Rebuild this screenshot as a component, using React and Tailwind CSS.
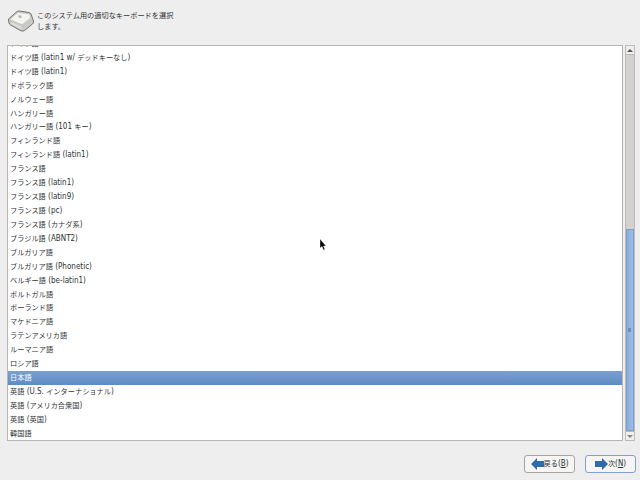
import React from 'react';

const languages = [
  'ドイツ語',
  'ドイツ語 (latin1 w/ デッドキーなし)',
  'ドイツ語 (latin1)',
  'ドボラック語',
  'ノルウェー語',
  'ハンガリー語',
  'ハンガリー語 (101 キー)',
  'フィンランド語',
  'フィンランド語 (latin1)',
  'フランス語',
  'フランス語 (latin1)',
  'フランス語 (latin9)',
  'フランス語 (pc)',
  'フランス語 (カナダ系)',
  'ブラジル語 (ABNT2)',
  'ブルガリア語',
  'ブルガリア語 (Phonetic)',
  'ベルギー語 (be-latin1)',
  'ポルトガル語',
  'ポーランド語',
  'マケドニア語',
  'ラテンアメリカ語',
  'ルーマニア語',
  'ロシア語',
  '日本語',
  '英語 (U.S. インターナショナル)',
  '英語 (アメリカ合衆国)',
  '英語 (英国)',
  '韓国語',
];

const Label = ({ text }) => (
  <>
    {text.split(/([\u3000-\u9fff]+)/).map((part, i) =>
      i % 2 === 1 ? <span key={i} className="text-[7.2px]">{part}</span> : <span key={i}>{part}</span>
    )}
  </>
);

const KeyIcon = () => (
  <svg width="26" height="22" viewBox="0 0 26 22" className="shrink-0">
    <path d="M0.5 9 L9 1.5 Q10 0.8 11.500 1 L21 2.500 Q22.500 2.800 23 4 L25.500 11 Q25.800 13 24.500 14 L16.500 20.500 Q15 21.500 13 20.800 L2.500 15 Q1 14 0.800 12.500 Z" fill="#c9c9c6" stroke="#5c5c5a" strokeWidth="0.8" />
    <path d="M2.500 9 L10 2.500 L20.500 4 Q22 4.500 22.500 7 L22.500 8 L15 14 Q14 14.500 12.500 14 L3 10 Z" fill="#f4f4f2" stroke="#bdbdba" strokeWidth="0.5" />
    <path d="M10 5.500 L13 5.500 L14 7.500 L11 8 Z" fill="#b5b5b2" />
    <path d="M3 12 L13 16.500 L14 19.500 L3.500 14 Z" fill="#e2e2df" />
  </svg>
);

const Arrow = ({ left }) => (
  <svg width="13" height="12" viewBox="0 0 13 12" className="shrink-0">
    <path
      d={left ? 'M0 6 L6 0 L6 3 L13 3 L13 9 L6 9 L6 12 Z' : 'M13 6 L7 0 L7 3 L0 3 L0 9 L7 9 L7 12 Z'}
      fill="#2f6ba8"
    />
  </svg>
);

const App = () => {
  return (
    <div className="relative w-[640px] h-[480px] overflow-hidden bg-[#eeeeee] text-[#2e3436] font-['DejaVu_Sans_Condensed','DejaVu_Sans','Noto_Sans_CJK_JP',sans-serif] text-[8px]">
      {/* Header */}
      <div className="h-[45px] flex items-start pl-[8px] pt-[10px] gap-[3px]">
        <KeyIcon />
        <p className="w-[140px] text-[7.2px] leading-[11px]">このシステム用の適切なキーボードを選択します。</p>
      </div>

      {/* List + scrollbar */}
      <div className="h-[396px] flex pl-[7px] pr-[4px]">
        <div className="w-[616px] border border-[#b8b6b2] bg-white overflow-hidden">
          <ul className="-mt-[9px]">
            {languages.map((name) => (
              <li
                key={name}
                className={
                  'h-[13.926px] pl-[2px] flex items-center whitespace-pre ' +
                  (name === '日本語' ? 'bg-gradient-to-b from-[#7ba0d2] to-[#5f8ac4] text-white' : '')
                }
              >
                <span><Label text={name} /></span>
              </li>
            ))}
          </ul>
        </div>

        <div className="w-[10px] ml-[1.500px] flex flex-col bg-[#d3d1ce] border border-[#bdbbb7]">
          <div className="h-[9px] bg-[#f0efed] border-b border-[#bdbbb7] flex items-center justify-center">
            <div className="w-0 h-0 border-x-[3px] border-x-transparent border-b-[3px] border-b-[#555]" />
          </div>
          <div className="h-[174px]" />
          <div className="flex-1 bg-gradient-to-r from-[#89aedd] to-[#9dbde6] border border-[#7d9fcf] flex items-center justify-center">
            <div className="w-[3px] h-[4px] bg-[#6d8fbf]" />
          </div>
          <div className="h-[9px] bg-[#f0efed] border-t border-[#bdbbb7] flex items-center justify-center">
            <div className="w-0 h-0 border-x-[3px] border-x-transparent border-t-[3px] border-t-[#888]" />
          </div>
        </div>
      </div>

      {/* Buttons */}
      <div className="flex justify-end gap-[10px] pt-[14px] pr-[4px]">
        <button className="w-[51px] h-[18px] flex items-center justify-center rounded-[3px] border border-[#a8a6a2] bg-[#f6f5f4]">
          <Arrow left />
          <span><span className="text-[7.2px]">戻る</span>(<span className="underline">B</span>)</span>
        </button>
        <button className="w-[51px] h-[18px] flex items-center justify-center rounded-[3px] border border-[#7ea3d3] bg-[#f6f5f4]">
          <Arrow />
          <span><span className="text-[7.2px]">次</span>(<span className="underline">N</span>)</span>
        </button>
      </div>

      {/* Mouse pointer */}
      <svg width="8" height="12" viewBox="0 0 8 12" className="absolute left-[320px] top-[239px]">
        <path d="M0 0 L0 9 L2 7.500 L3.500 11 L5 10.500 L3.500 7 L6 7 Z" fill="#000" stroke="#fff" strokeWidth="0.4" />
      </svg>
    </div>
  );
};

export default App;
